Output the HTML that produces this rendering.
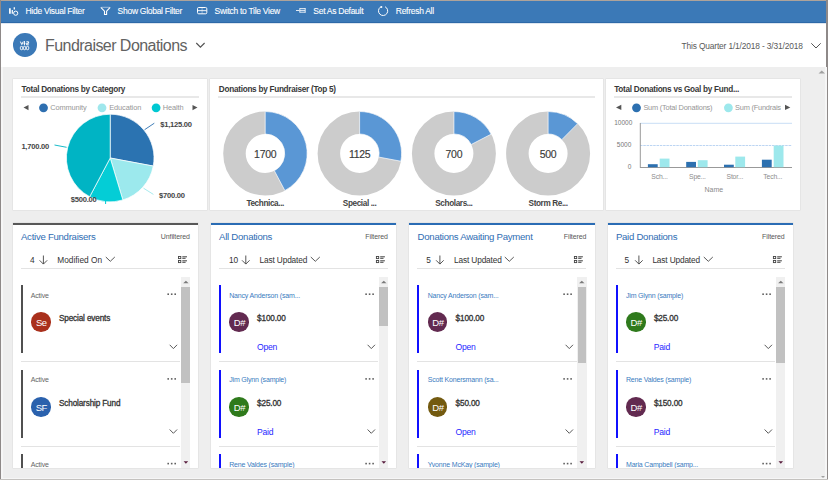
<!DOCTYPE html>
<html><head><meta charset="utf-8">
<style>
*{margin:0;padding:0;box-sizing:border-box}
html,body{width:828px;height:480px;overflow:hidden;background:#fff;font-family:"Liberation Sans",sans-serif}
.a{position:absolute;white-space:nowrap}
.tb{position:absolute;top:5.9px;font-size:8.5px;letter-spacing:-0.28px;color:#fff;-webkit-text-stroke:0.1px #fff;line-height:11px;white-space:nowrap}
.card{position:absolute;background:#fff;box-shadow:0 0 0 0.5px rgba(0,0,0,.07)}
.ct{position:absolute;font-weight:bold;font-size:8.2px;letter-spacing:-0.27px;color:#383838;line-height:9px;white-space:nowrap}
.ul{position:absolute;height:2px;background:#e8e8e8}
.lg{position:absolute;font-size:7.4px;letter-spacing:-0.1px;color:#969696;line-height:8px;white-space:nowrap}
.dot{position:absolute;width:9px;height:9px;border-radius:50%}
.lbl{position:absolute;font-weight:bold;font-size:7.6px;letter-spacing:-0.25px;color:#454545;line-height:8px;white-space:nowrap}
svg{position:absolute;left:0;top:0;overflow:visible}
</style></head><body>

<div class="a" style="left:0;top:0;width:828px;height:1px;background:#aea39a"></div>
<div class="a" style="left:0;top:0;width:1.2px;height:480px;background:#8e8988"></div>
<div class="a" style="left:826.3px;top:0;width:1.7px;height:480px;background:#8e8988"></div>
<div class="a" style="left:0;top:479px;width:828px;height:1px;background:#c4c2bf"></div>
<div class="a" style="left:1px;top:1px;width:825px;height:22px;background:#3b79b7"></div>
<div class="a" style="left:1px;top:22px;width:825px;height:1px;background:#2d69a8"></div>
<div class="a" style="left:1px;top:23px;width:825px;height:1px;background:#dde6f0"></div>
<div class="tb" style="left:25.5px">Hide Visual Filter</div>
<div class="tb" style="left:117.6px">Show Global Filter</div>
<div class="tb" style="left:214.6px">Switch to Tile View</div>
<div class="tb" style="left:313.3px">Set As Default</div>
<div class="tb" style="left:395.8px">Refresh All</div>
<svg width="828" height="30">
<g fill="none" stroke="#fff" stroke-width="1">
 <!-- hide visual filter: bars + gear -->
 <path d="M9.9,8.3 V13.8" stroke-width="1.7"/><path d="M12.3,10 V13.8" stroke-width="1.2"/><path d="M14.3,7.2 V9.6" stroke-width="1.3"/>
 <circle cx="15.7" cy="13.2" r="2.1"/>
 <!-- funnel -->
 <path d="M100.8,7.4 L104.5,11.2 V14.5 H106.6 V11.2 L110.2,7.4" stroke-width="1.1"/><path d="M101.5,7.3 H109.5" stroke-opacity="0.5"/>
 <!-- tile view -->
 <rect x="197.5" y="7.5" width="9.3" height="6.3" rx="1.2" stroke-width="1"/>
 <path d="M197.8,10.65 H206.5" stroke-width="0.9"/><path d="M202.1,7.8 V13.5" stroke-width="0.7" stroke-opacity="0.6"/>
 <!-- set default: pin -->
 <path d="M296,10.5 H299.5 M299.8,8.2 V12.6 M299.8,8.6 H305.2 M299.8,12.2 H305.2 M305.2,8 V12.8 M300,10.4 H305" stroke-width="0.85"/>
 <!-- refresh -->
 <path d="M385.04,6.73 A4.6,4.6 0 1 1 380.46,7.13" stroke-width="1"/>
 <rect x="380.4" y="6.1" width="1.8" height="1.8" fill="#fff" stroke="none"/>
</g>
</svg>
<div class="a" style="left:12.8px;top:33.1px;width:23.8px;height:23.8px;border-radius:50%;background:#3b79b7"></div>
<svg width="828" height="80"><g fill="none" stroke="#fff" stroke-width="0.8">
<g stroke-width="1"><rect x="20.4" y="46.4" width="2.3" height="3.3" rx="1"/><rect x="23.4" y="46.4" width="2.3" height="3.3" rx="1"/><rect x="26.4" y="46.4" width="2.3" height="3.3" rx="1"/><path d="M20.4,41.6 L21.8,44.6 L23.2,41.6 M24.4,41 V45.3 M23.6,43.3 H25.4 M26.4,41.8 H28.6 V43.3 H26.6 V44.8 H28.8"/></g>
</g></svg>
<div class="a" style="left:45px;top:36.8px;font-size:16px;color:#626262;line-height:18px;letter-spacing:-0.55px">Fundraiser Donations</div>
<svg width="828" height="80"><path d="M196.3,43 L200.4,47.2 L204.6,43" fill="none" stroke="#505050" stroke-width="1.1"/>
<path d="M811.3,43.3 L816,48 L820.7,43.3" fill="none" stroke="#555" stroke-width="1"/></svg>
<div class="a" style="left:681.5px;top:40.5px;font-size:8.4px;color:#595959;line-height:11px;letter-spacing:-0.15px">This Quarter 1/1/2018 - 3/31/2018</div>
<div class="a" style="left:1px;top:66.5px;width:825.5px;height:412.5px;background:#f6f6f6"></div>
<div class="a" style="left:2.5px;top:66.5px;width:822.5px;height:411.5px;background:#eeeeee"></div>
<svg width="828" height="480"><path d="M818.5,73.5 L821.8,70.5 L825,73.5 Z" fill="#a0a0a0"/>
<path d="M821,476 L823,478 L825,476 Z" fill="#a0a0a0"/></svg>
<div class="card" style="left:12.7px;top:79px;width:194.3px;height:131px"></div>
<div class="card" style="left:209.8px;top:79px;width:393.2px;height:131px"></div>
<div class="card" style="left:605.8px;top:79px;width:194.2px;height:131px"></div>
<div class="ct" style="left:21.6px;top:84.5px">Total Donations by Category</div>
<div class="ul" style="left:21px;top:95.8px;width:178px"></div>
<div class="ct" style="left:218.8px;top:84.5px">Donations by Fundraiser (Top 5)</div>
<div class="ul" style="left:218px;top:95.8px;width:377px"></div>
<div class="ct" style="left:614.2px;top:84.5px">Total Donations vs Goal by Fund...</div>
<div class="ul" style="left:614px;top:95.8px;width:178px"></div>
<svg width="828" height="480">
<path d="M23.5,107.6 L28.5,105 L28.5,110.2 Z" fill="#555"/>
<path d="M197.5,107.6 L192.5,105 L192.5,110.2 Z" fill="#555"/>
<circle cx="43.5" cy="107.8" r="4.4" fill="#2e6fb0"/>
<circle cx="102" cy="107.8" r="4.4" fill="#9fe7ec"/>
<circle cx="156.1" cy="107.8" r="4.4" fill="#00c8d2"/>
<path d="M110.20,158.00 L110.20,114.20 A43.8,43.8 0 0 1 153.25,166.07 Z" fill="#2b73b1" stroke="#fff" stroke-width="0.7"/>
<path d="M110.20,158.00 L153.25,166.07 A43.8,43.8 0 0 1 122.84,199.94 Z" fill="#9ce9ed" stroke="#fff" stroke-width="0.7"/>
<path d="M110.20,158.00 L122.84,199.94 A43.8,43.8 0 0 1 89.67,196.69 Z" fill="#04cdd6" stroke="#fff" stroke-width="0.7"/>
<path d="M110.20,158.00 L89.67,196.69 A43.8,43.8 0 0 1 110.20,114.20 Z" fill="#00b4c4" stroke="#fff" stroke-width="0.7"/>
<path d="M144.6,129.7 L154.3,123.2" stroke="#2c70b0" stroke-width="0.9"/>
<path d="M54.5,145 L66.6,147.3" stroke="#00b3c3" stroke-width="0.9"/>
<path d="M143.5,188.2 L153.4,194.4" stroke="#9de8ec" stroke-width="0.9"/>
<path d="M105.6,201 V204" stroke="#00c8d3" stroke-width="1"/>
<path d="M616,107.4 L621.3,104.8 L621.3,110 Z" fill="#555"/>
<path d="M790.3,107.4 L785,104.8 L785,110 Z" fill="#555"/>
<circle cx="636.5" cy="107.8" r="4.4" fill="#2c70b0"/>
<circle cx="728.4" cy="107.8" r="4.4" fill="#9de8ec"/>
<circle cx="265.2" cy="153.5" r="30.75" fill="none" stroke="#cccccc" stroke-width="22.5"/>
<path d="M265.20,111.50 A42,42 0 0 1 284.89,190.60 L274.34,170.73 A19.5,19.5 0 0 0 265.20,134.00 Z" fill="#5a97d5" stroke="#fff" stroke-width="0.7"/>
<circle cx="359.6" cy="153.5" r="30.75" fill="none" stroke="#cccccc" stroke-width="22.5"/>
<path d="M359.60,111.50 A42,42 0 0 1 400.88,161.24 L378.77,157.09 A19.5,19.5 0 0 0 359.60,134.00 Z" fill="#5a97d5" stroke="#fff" stroke-width="0.7"/>
<circle cx="453.9" cy="153.5" r="30.75" fill="none" stroke="#cccccc" stroke-width="22.5"/>
<path d="M453.90,111.50 A42,42 0 0 1 491.19,134.18 L471.21,144.53 A19.5,19.5 0 0 0 453.90,134.00 Z" fill="#5a97d5" stroke="#fff" stroke-width="0.7"/>
<circle cx="548.1" cy="153.5" r="30.75" fill="none" stroke="#cccccc" stroke-width="22.5"/>
<path d="M548.10,111.50 A42,42 0 0 1 577.65,123.66 L561.82,139.64 A19.5,19.5 0 0 0 548.10,134.00 Z" fill="#5a97d5" stroke="#fff" stroke-width="0.7"/>
<path d="M640,145.5 H792" stroke="#bcd5f3" stroke-width="1" stroke-dasharray="2.5,0.8"/>
<path d="M640,123.3 H792" stroke="#c9def5" stroke-width="1"/>
<path d="M640.3,123 V167.8 M640,167.5 H792" stroke="#999" stroke-width="1"/>
<rect x="647.9" y="164.2" width="9.8" height="3.00" fill="#2c70b0"/>
<rect x="659.7" y="158.6" width="9.8" height="8.60" fill="#9de8ec"/>
<rect x="686.2" y="161.9" width="9.8" height="5.30" fill="#2c70b0"/>
<rect x="697.8" y="160.2" width="9.8" height="7.00" fill="#9de8ec"/>
<rect x="724" y="164.7" width="9.8" height="2.50" fill="#2c70b0"/>
<rect x="735.3" y="156.6" width="9.8" height="10.60" fill="#9de8ec"/>
<rect x="761.9" y="159.7" width="9.8" height="7.50" fill="#2c70b0"/>
<rect x="773.7" y="145.6" width="9.8" height="21.60" fill="#9de8ec"/>
</svg>
<div class="lg" style="left:50.2px;top:103.8px">Community</div>
<div class="lg" style="left:109.2px;top:103.8px">Education</div>
<div class="lg" style="left:162.7px;top:103.8px">Health</div>
<div class="lg" style="left:643.4px;top:103.8px;letter-spacing:-0.2px">Sum (Total Donations)</div>
<div class="lg" style="left:735px;top:103.8px;width:46px;overflow:hidden;letter-spacing:-0.2px">Sum (Fundraising Goal)</div>
<div class="lbl" style="left:160.2px;top:121px">$1,125.00</div>
<div class="lbl" style="left:21.4px;top:142.8px">1,700.00</div>
<div class="lbl" style="left:70.8px;top:195.7px">$500.00</div>
<div class="lbl" style="left:159px;top:192px">$700.00</div>
<div class="a" style="left:245.2px;top:147.5px;width:40px;text-align:center;font-size:10.5px;color:#3a3a3a;line-height:12px;letter-spacing:-0.3px;-webkit-text-stroke:0.15px #3a3a3a">1700</div>
<div class="lbl" style="left:240.2px;top:199.9px;width:50px;text-align:center;color:#444;font-size:8.2px;letter-spacing:-0.38px">Technica...</div>
<div class="a" style="left:339.6px;top:147.5px;width:40px;text-align:center;font-size:10.5px;color:#3a3a3a;line-height:12px;letter-spacing:-0.3px;-webkit-text-stroke:0.15px #3a3a3a">1125</div>
<div class="lbl" style="left:334.6px;top:199.9px;width:50px;text-align:center;color:#444;font-size:8.2px;letter-spacing:-0.38px">Special ...</div>
<div class="a" style="left:433.9px;top:147.5px;width:40px;text-align:center;font-size:10.5px;color:#3a3a3a;line-height:12px;letter-spacing:-0.3px;-webkit-text-stroke:0.15px #3a3a3a">700</div>
<div class="lbl" style="left:428.9px;top:199.9px;width:50px;text-align:center;color:#444;font-size:8.2px;letter-spacing:-0.38px">Scholars...</div>
<div class="a" style="left:528.1px;top:147.5px;width:40px;text-align:center;font-size:10.5px;color:#3a3a3a;line-height:12px;letter-spacing:-0.3px;-webkit-text-stroke:0.15px #3a3a3a">500</div>
<div class="lbl" style="left:523.1px;top:199.9px;width:50px;text-align:center;color:#444;font-size:8.2px;letter-spacing:-0.38px">Storm Re...</div>
<div class="a" style="left:614.2px;top:119px;font-size:6.5px;color:#777;line-height:8px">10000</div>
<div class="a" style="left:616.8px;top:141.2px;font-size:6.5px;color:#777;line-height:8px">5000</div>
<div class="a" style="left:627.8px;top:162.8px;font-size:6.5px;color:#777;line-height:8px">0</div>
<div class="a" style="left:651.3px;top:173px;font-size:6.8px;letter-spacing:-0.15px;color:#8c8c8c;line-height:8px">Sch...</div>
<div class="a" style="left:689px;top:173px;font-size:6.8px;letter-spacing:-0.15px;color:#8c8c8c;line-height:8px">Spe...</div>
<div class="a" style="left:726.5px;top:173px;font-size:6.8px;letter-spacing:-0.15px;color:#8c8c8c;line-height:8px">Stor...</div>
<div class="a" style="left:763.3px;top:173px;font-size:6.8px;letter-spacing:-0.15px;color:#8c8c8c;line-height:8px">Tech...</div>
<div class="a" style="left:704.5px;top:185.5px;font-size:7px;color:#8a8a8a;line-height:8px">Name</div>
<div class="card" style="left:12.7px;top:223px;width:185.6px;height:245px;overflow:hidden">
<div class="a" style="left:0;top:-0.3px;width:185.6px;height:1.9px;background:#585858"></div>
<div class="a" style="left:8.3px;top:8px;font-size:9.6px;letter-spacing:-0.27px;color:#2f6db3;line-height:11px">Active Fundraisers</div>
<div class="a" style="right:8.5px;top:9.2px;font-size:7px;letter-spacing:-0.1px;color:#595959;line-height:9px">Unfiltered</div>
<div class="a" style="left:17.4px;top:32px;font-size:8.3px;color:#333;line-height:10px">4</div>
<svg width="200" height="250"><g fill="none" stroke="#444" stroke-width="0.9"><path d="M30.4,32.5 V41 M26.6,37.3 L30.4,41.1 L34.2,37.3"/></g></svg>
<div class="a" style="left:44.6px;top:32.4px;font-size:8.3px;letter-spacing:0px;color:#333;line-height:10px">Modified On</div>
<svg width="200" height="250"><g fill="none" stroke="#444" stroke-width="0.9"><path d="M92.80000000000001,34 L97.30000000000001,38.3 L101.80000000000001,34"/><rect x="165.5" y="33.5" width="2.3" height="2.1" stroke-width="0.9"/><rect x="165.5" y="37.5" width="2.3" height="2.1" stroke-width="0.9"/><path d="M169.29999999999998,33.8 H174.0 M169.29999999999998,35.3 H172.6 M169.29999999999998,37.8 H174.0 M169.29999999999998,39.3 H172.6" stroke-width="1"/></g></svg>
<div class="a" style="left:8px;top:44.5px;width:169.1px;height:1px;background:#e3e3e3"></div>
<div class="a" style="left:168.1px;top:54px;width:9.7px;height:193px;background:#f0f0f0"></div>
<div class="a" style="left:168.6px;top:64px;width:8.5px;height:96px;background:#c1c1c1"></div>
<svg width="200" height="250"><path d="M170.2,60.3 L172.9,57.8 L175.6,60.3 Z" fill="#7a7a7a"/><path d="M170.6,238.2 L172.9,240.8 L175.2,238.2 Z" fill="#5a1f3f"/></svg>
<div class="a" style="left:8px;top:62.0px;width:2px;height:68.3px;background:#505050"></div>
<div class="a" style="left:18px;top:67.5px;font-size:7px;letter-spacing:-0.18px;color:#666;line-height:9px">Active</div>
<svg width="200" height="480"><g fill="#606060"><rect x="154.4" y="70.4" width="1.6" height="1.6"/><rect x="157.9" y="70.4" width="1.6" height="1.6"/><rect x="161.4" y="70.4" width="1.6" height="1.6"/></g></svg>
<div class="a" style="left:18.6px;top:89.3px;width:19.6px;height:19.6px;border-radius:50%;background:#a9301c;color:#fff;font-size:9.5px;letter-spacing:-0.5px;line-height:22.2px;text-align:center;text-indent:0.4px">Se</div>
<div class="a" style="left:46.3px;top:90.9px;font-size:8.2px;letter-spacing:-0.15px;color:#333;-webkit-text-stroke:0.3px #333;line-height:9px">Special events</div>
<svg width="200" height="480"><path d="M156.7,121.8 L160.4,125.6 L164.1,121.8" fill="none" stroke="#5a5a5a" stroke-width="1"/></svg>
<div class="a" style="left:8px;top:138.3px;width:159.6px;height:1px;background:#e3e3e3"></div>
<div class="a" style="left:8px;top:146.7px;width:2px;height:68.3px;background:#505050"></div>
<div class="a" style="left:18px;top:152.2px;font-size:7px;letter-spacing:-0.18px;color:#666;line-height:9px">Active</div>
<svg width="200" height="480"><g fill="#606060"><rect x="154.4" y="155.1" width="1.6" height="1.6"/><rect x="157.9" y="155.1" width="1.6" height="1.6"/><rect x="161.4" y="155.1" width="1.6" height="1.6"/></g></svg>
<div class="a" style="left:18.6px;top:174.0px;width:19.6px;height:19.6px;border-radius:50%;background:#2a61ad;color:#fff;font-size:9.5px;letter-spacing:-0.5px;line-height:22.2px;text-align:center;text-indent:0.4px">SF</div>
<div class="a" style="left:46.3px;top:175.6px;font-size:8.2px;letter-spacing:-0.15px;color:#333;-webkit-text-stroke:0.3px #333;line-height:9px">Scholarship Fund</div>
<svg width="200" height="480"><path d="M156.7,206.5 L160.4,210.29999999999998 L164.1,206.5" fill="none" stroke="#5a5a5a" stroke-width="1"/></svg>
<div class="a" style="left:8px;top:223.0px;width:159.6px;height:1px;background:#e3e3e3"></div>
<div class="a" style="left:8px;top:231.4px;width:2px;height:68.3px;background:#505050"></div>
<div class="a" style="left:18px;top:236.9px;font-size:7px;letter-spacing:-0.18px;color:#666;line-height:9px">Active</div>
<svg width="200" height="480"><g fill="#606060"><rect x="154.4" y="239.8" width="1.6" height="1.6"/><rect x="157.9" y="239.8" width="1.6" height="1.6"/><rect x="161.4" y="239.8" width="1.6" height="1.6"/></g></svg>
<div class="a" style="left:8px;top:307.7px;width:159.6px;height:1px;background:#e3e3e3"></div>
</div>
<div class="card" style="left:210.8px;top:223px;width:185.5px;height:245px;overflow:hidden">
<div class="a" style="left:0;top:-0.3px;width:185.5px;height:1.9px;background:#2a6cb4"></div>
<div class="a" style="left:8.3px;top:8px;font-size:9.6px;letter-spacing:-0.27px;color:#2f6db3;line-height:11px">All Donations</div>
<div class="a" style="right:8.5px;top:9.2px;font-size:7px;letter-spacing:-0.1px;color:#595959;line-height:9px">Filtered</div>
<div class="a" style="left:18.2px;top:32px;font-size:8.3px;color:#333;line-height:10px">10</div>
<svg width="200" height="250"><g fill="none" stroke="#444" stroke-width="0.9"><path d="M34.8,32.5 V41 M31.0,37.3 L34.8,41.1 L38.599999999999994,37.3"/></g></svg>
<div class="a" style="left:48.8px;top:32.4px;font-size:8.3px;letter-spacing:-0.15px;color:#333;line-height:10px">Last Updated</div>
<svg width="200" height="250"><g fill="none" stroke="#444" stroke-width="0.9"><path d="M99.8,34 L104.3,38.3 L108.8,34"/><rect x="165.4" y="33.5" width="2.3" height="2.1" stroke-width="0.9"/><rect x="165.4" y="37.5" width="2.3" height="2.1" stroke-width="0.9"/><path d="M169.2,33.8 H173.9 M169.2,35.3 H172.5 M169.2,37.8 H173.9 M169.2,39.3 H172.5" stroke-width="1"/></g></svg>
<div class="a" style="left:8px;top:44.5px;width:169.0px;height:1px;background:#e3e3e3"></div>
<div class="a" style="left:168.0px;top:54px;width:9.7px;height:193px;background:#f0f0f0"></div>
<div class="a" style="left:168.5px;top:64px;width:8.5px;height:38.5px;background:#c1c1c1"></div>
<svg width="200" height="250"><path d="M170.1,60.3 L172.8,57.8 L175.5,60.3 Z" fill="#7a7a7a"/><path d="M170.5,238.2 L172.8,240.8 L175.1,238.2 Z" fill="#5a1f3f"/></svg>
<div class="a" style="left:8px;top:62.0px;width:2px;height:68.3px;background:#1010ff"></div>
<div class="a" style="left:18.4px;top:67.5px;font-size:7px;letter-spacing:-0.18px;color:#3a7bc0;line-height:9px">Nancy Anderson (sam...</div>
<svg width="200" height="480"><g fill="#606060"><rect x="154.3" y="70.4" width="1.6" height="1.6"/><rect x="157.8" y="70.4" width="1.6" height="1.6"/><rect x="161.3" y="70.4" width="1.6" height="1.6"/></g></svg>
<div class="a" style="left:18.6px;top:89.3px;width:19.6px;height:19.6px;border-radius:50%;background:#622a50;color:#fff;font-size:9.5px;letter-spacing:-0.5px;line-height:22.2px;text-align:center;text-indent:0.4px">D#</div>
<div class="a" style="left:46.3px;top:90.9px;font-size:8.2px;letter-spacing:-0.15px;color:#333;-webkit-text-stroke:0.3px #333;line-height:9px">$100.00</div>
<div class="a" style="left:46.2px;top:119.2px;font-size:8.6px;letter-spacing:-0.25px;color:#2828ff;line-height:10px">Open</div>
<svg width="200" height="480"><path d="M156.6,121.8 L160.3,125.6 L164.0,121.8" fill="none" stroke="#5a5a5a" stroke-width="1"/></svg>
<div class="a" style="left:8px;top:138.3px;width:159.5px;height:1px;background:#e3e3e3"></div>
<div class="a" style="left:8px;top:146.7px;width:2px;height:68.3px;background:#1010ff"></div>
<div class="a" style="left:18.4px;top:152.2px;font-size:7px;letter-spacing:-0.18px;color:#3a7bc0;line-height:9px">Jim Glynn (sample)</div>
<svg width="200" height="480"><g fill="#606060"><rect x="154.3" y="155.1" width="1.6" height="1.6"/><rect x="157.8" y="155.1" width="1.6" height="1.6"/><rect x="161.3" y="155.1" width="1.6" height="1.6"/></g></svg>
<div class="a" style="left:18.6px;top:174.0px;width:19.6px;height:19.6px;border-radius:50%;background:#2f7a1c;color:#fff;font-size:9.5px;letter-spacing:-0.5px;line-height:22.2px;text-align:center;text-indent:0.4px">D#</div>
<div class="a" style="left:46.3px;top:175.6px;font-size:8.2px;letter-spacing:-0.15px;color:#333;-webkit-text-stroke:0.3px #333;line-height:9px">$25.00</div>
<div class="a" style="left:46.2px;top:203.89999999999998px;font-size:8.6px;letter-spacing:-0.25px;color:#2828ff;line-height:10px">Paid</div>
<svg width="200" height="480"><path d="M156.6,206.5 L160.3,210.29999999999998 L164.0,206.5" fill="none" stroke="#5a5a5a" stroke-width="1"/></svg>
<div class="a" style="left:8px;top:223.0px;width:159.5px;height:1px;background:#e3e3e3"></div>
<div class="a" style="left:8px;top:231.4px;width:2px;height:68.3px;background:#1010ff"></div>
<div class="a" style="left:18.4px;top:236.9px;font-size:7px;letter-spacing:-0.18px;color:#3a7bc0;line-height:9px">Rene Valdes (sample)</div>
<svg width="200" height="480"><g fill="#606060"><rect x="154.3" y="239.8" width="1.6" height="1.6"/><rect x="157.8" y="239.8" width="1.6" height="1.6"/><rect x="161.3" y="239.8" width="1.6" height="1.6"/></g></svg>
<div class="a" style="left:8px;top:307.7px;width:159.5px;height:1px;background:#e3e3e3"></div>
</div>
<div class="card" style="left:409.3px;top:223px;width:185.5px;height:245px;overflow:hidden">
<div class="a" style="left:0;top:-0.3px;width:185.5px;height:1.9px;background:#2a6cb4"></div>
<div class="a" style="left:8.3px;top:8px;font-size:9.6px;letter-spacing:-0.27px;color:#2f6db3;line-height:11px">Donations Awaiting Payment</div>
<div class="a" style="right:8.5px;top:9.2px;font-size:7px;letter-spacing:-0.1px;color:#595959;line-height:9px">Filtered</div>
<div class="a" style="left:17.0px;top:32px;font-size:8.3px;color:#333;line-height:10px">5</div>
<svg width="200" height="250"><g fill="none" stroke="#444" stroke-width="0.9"><path d="M30.9,32.5 V41 M27.1,37.3 L30.9,41.1 L34.7,37.3"/></g></svg>
<div class="a" style="left:44.8px;top:32.4px;font-size:8.3px;letter-spacing:-0.15px;color:#333;line-height:10px">Last Updated</div>
<svg width="200" height="250"><g fill="none" stroke="#444" stroke-width="0.9"><path d="M95.8,34 L100.3,38.3 L104.8,34"/><rect x="165.4" y="33.5" width="2.3" height="2.1" stroke-width="0.9"/><rect x="165.4" y="37.5" width="2.3" height="2.1" stroke-width="0.9"/><path d="M169.2,33.8 H173.9 M169.2,35.3 H172.5 M169.2,37.8 H173.9 M169.2,39.3 H172.5" stroke-width="1"/></g></svg>
<div class="a" style="left:8px;top:44.5px;width:169.0px;height:1px;background:#e3e3e3"></div>
<div class="a" style="left:168.0px;top:54px;width:9.7px;height:193px;background:#f0f0f0"></div>
<div class="a" style="left:168.5px;top:64px;width:8.5px;height:76.30000000000001px;background:#c1c1c1"></div>
<svg width="200" height="250"><path d="M170.1,60.3 L172.8,57.8 L175.5,60.3 Z" fill="#7a7a7a"/><path d="M170.5,238.2 L172.8,240.8 L175.1,238.2 Z" fill="#5a1f3f"/></svg>
<div class="a" style="left:8px;top:62.0px;width:2px;height:68.3px;background:#1010ff"></div>
<div class="a" style="left:18.4px;top:67.5px;font-size:7px;letter-spacing:-0.18px;color:#3a7bc0;line-height:9px">Nancy Anderson (sam...</div>
<svg width="200" height="480"><g fill="#606060"><rect x="154.3" y="70.4" width="1.6" height="1.6"/><rect x="157.8" y="70.4" width="1.6" height="1.6"/><rect x="161.3" y="70.4" width="1.6" height="1.6"/></g></svg>
<div class="a" style="left:18.6px;top:89.3px;width:19.6px;height:19.6px;border-radius:50%;background:#622a50;color:#fff;font-size:9.5px;letter-spacing:-0.5px;line-height:22.2px;text-align:center;text-indent:0.4px">D#</div>
<div class="a" style="left:46.3px;top:90.9px;font-size:8.2px;letter-spacing:-0.15px;color:#333;-webkit-text-stroke:0.3px #333;line-height:9px">$100.00</div>
<div class="a" style="left:46.2px;top:119.2px;font-size:8.6px;letter-spacing:-0.25px;color:#2828ff;line-height:10px">Open</div>
<svg width="200" height="480"><path d="M156.6,121.8 L160.3,125.6 L164.0,121.8" fill="none" stroke="#5a5a5a" stroke-width="1"/></svg>
<div class="a" style="left:8px;top:138.3px;width:159.5px;height:1px;background:#e3e3e3"></div>
<div class="a" style="left:8px;top:146.7px;width:2px;height:68.3px;background:#1010ff"></div>
<div class="a" style="left:18.4px;top:152.2px;font-size:7px;letter-spacing:-0.18px;color:#3a7bc0;line-height:9px">Scott Konersmann (sa...</div>
<svg width="200" height="480"><g fill="#606060"><rect x="154.3" y="155.1" width="1.6" height="1.6"/><rect x="157.8" y="155.1" width="1.6" height="1.6"/><rect x="161.3" y="155.1" width="1.6" height="1.6"/></g></svg>
<div class="a" style="left:18.6px;top:174.0px;width:19.6px;height:19.6px;border-radius:50%;background:#735a10;color:#fff;font-size:9.5px;letter-spacing:-0.5px;line-height:22.2px;text-align:center;text-indent:0.4px">D#</div>
<div class="a" style="left:46.3px;top:175.6px;font-size:8.2px;letter-spacing:-0.15px;color:#333;-webkit-text-stroke:0.3px #333;line-height:9px">$50.00</div>
<div class="a" style="left:46.2px;top:203.89999999999998px;font-size:8.6px;letter-spacing:-0.25px;color:#2828ff;line-height:10px">Open</div>
<svg width="200" height="480"><path d="M156.6,206.5 L160.3,210.29999999999998 L164.0,206.5" fill="none" stroke="#5a5a5a" stroke-width="1"/></svg>
<div class="a" style="left:8px;top:223.0px;width:159.5px;height:1px;background:#e3e3e3"></div>
<div class="a" style="left:8px;top:231.4px;width:2px;height:68.3px;background:#1010ff"></div>
<div class="a" style="left:18.4px;top:236.9px;font-size:7px;letter-spacing:-0.18px;color:#3a7bc0;line-height:9px">Yvonne McKay (sample)</div>
<svg width="200" height="480"><g fill="#606060"><rect x="154.3" y="239.8" width="1.6" height="1.6"/><rect x="157.8" y="239.8" width="1.6" height="1.6"/><rect x="161.3" y="239.8" width="1.6" height="1.6"/></g></svg>
<div class="a" style="left:8px;top:307.7px;width:159.5px;height:1px;background:#e3e3e3"></div>
</div>
<div class="card" style="left:607.6px;top:223px;width:185.5px;height:245px;overflow:hidden">
<div class="a" style="left:0;top:-0.3px;width:185.5px;height:1.9px;background:#2a6cb4"></div>
<div class="a" style="left:8.3px;top:8px;font-size:9.6px;letter-spacing:-0.27px;color:#2f6db3;line-height:11px">Paid Donations</div>
<div class="a" style="right:8.5px;top:9.2px;font-size:7px;letter-spacing:-0.1px;color:#595959;line-height:9px">Filtered</div>
<div class="a" style="left:17.0px;top:32px;font-size:8.3px;color:#333;line-height:10px">5</div>
<svg width="200" height="250"><g fill="none" stroke="#444" stroke-width="0.9"><path d="M30.9,32.5 V41 M27.1,37.3 L30.9,41.1 L34.7,37.3"/></g></svg>
<div class="a" style="left:44.8px;top:32.4px;font-size:8.3px;letter-spacing:-0.15px;color:#333;line-height:10px">Last Updated</div>
<svg width="200" height="250"><g fill="none" stroke="#444" stroke-width="0.9"><path d="M95.8,34 L100.3,38.3 L104.8,34"/><rect x="165.4" y="33.5" width="2.3" height="2.1" stroke-width="0.9"/><rect x="165.4" y="37.5" width="2.3" height="2.1" stroke-width="0.9"/><path d="M169.2,33.8 H173.9 M169.2,35.3 H172.5 M169.2,37.8 H173.9 M169.2,39.3 H172.5" stroke-width="1"/></g></svg>
<div class="a" style="left:8px;top:44.5px;width:169.0px;height:1px;background:#e3e3e3"></div>
<div class="a" style="left:168.0px;top:54px;width:9.7px;height:193px;background:#f0f0f0"></div>
<div class="a" style="left:168.5px;top:64px;width:8.5px;height:76.30000000000001px;background:#c1c1c1"></div>
<svg width="200" height="250"><path d="M170.1,60.3 L172.8,57.8 L175.5,60.3 Z" fill="#7a7a7a"/><path d="M170.5,238.2 L172.8,240.8 L175.1,238.2 Z" fill="#5a1f3f"/></svg>
<div class="a" style="left:8px;top:62.0px;width:2px;height:68.3px;background:#1010ff"></div>
<div class="a" style="left:18.4px;top:67.5px;font-size:7px;letter-spacing:-0.18px;color:#3a7bc0;line-height:9px">Jim Glynn (sample)</div>
<svg width="200" height="480"><g fill="#606060"><rect x="154.3" y="70.4" width="1.6" height="1.6"/><rect x="157.8" y="70.4" width="1.6" height="1.6"/><rect x="161.3" y="70.4" width="1.6" height="1.6"/></g></svg>
<div class="a" style="left:18.6px;top:89.3px;width:19.6px;height:19.6px;border-radius:50%;background:#2f7a1c;color:#fff;font-size:9.5px;letter-spacing:-0.5px;line-height:22.2px;text-align:center;text-indent:0.4px">D#</div>
<div class="a" style="left:46.3px;top:90.9px;font-size:8.2px;letter-spacing:-0.15px;color:#333;-webkit-text-stroke:0.3px #333;line-height:9px">$25.00</div>
<div class="a" style="left:46.2px;top:119.2px;font-size:8.6px;letter-spacing:-0.25px;color:#2828ff;line-height:10px">Paid</div>
<svg width="200" height="480"><path d="M156.6,121.8 L160.3,125.6 L164.0,121.8" fill="none" stroke="#5a5a5a" stroke-width="1"/></svg>
<div class="a" style="left:8px;top:138.3px;width:159.5px;height:1px;background:#e3e3e3"></div>
<div class="a" style="left:8px;top:146.7px;width:2px;height:68.3px;background:#1010ff"></div>
<div class="a" style="left:18.4px;top:152.2px;font-size:7px;letter-spacing:-0.18px;color:#3a7bc0;line-height:9px">Rene Valdes (sample)</div>
<svg width="200" height="480"><g fill="#606060"><rect x="154.3" y="155.1" width="1.6" height="1.6"/><rect x="157.8" y="155.1" width="1.6" height="1.6"/><rect x="161.3" y="155.1" width="1.6" height="1.6"/></g></svg>
<div class="a" style="left:18.6px;top:174.0px;width:19.6px;height:19.6px;border-radius:50%;background:#622a50;color:#fff;font-size:9.5px;letter-spacing:-0.5px;line-height:22.2px;text-align:center;text-indent:0.4px">D#</div>
<div class="a" style="left:46.3px;top:175.6px;font-size:8.2px;letter-spacing:-0.15px;color:#333;-webkit-text-stroke:0.3px #333;line-height:9px">$150.00</div>
<div class="a" style="left:46.2px;top:203.89999999999998px;font-size:8.6px;letter-spacing:-0.25px;color:#2828ff;line-height:10px">Paid</div>
<svg width="200" height="480"><path d="M156.6,206.5 L160.3,210.29999999999998 L164.0,206.5" fill="none" stroke="#5a5a5a" stroke-width="1"/></svg>
<div class="a" style="left:8px;top:223.0px;width:159.5px;height:1px;background:#e3e3e3"></div>
<div class="a" style="left:8px;top:231.4px;width:2px;height:68.3px;background:#1010ff"></div>
<div class="a" style="left:18.4px;top:236.9px;font-size:7px;letter-spacing:-0.18px;color:#3a7bc0;line-height:9px">Maria Campbell (samp...</div>
<svg width="200" height="480"><g fill="#606060"><rect x="154.3" y="239.8" width="1.6" height="1.6"/><rect x="157.8" y="239.8" width="1.6" height="1.6"/><rect x="161.3" y="239.8" width="1.6" height="1.6"/></g></svg>
<div class="a" style="left:8px;top:307.7px;width:159.5px;height:1px;background:#e3e3e3"></div>
</div>
</body></html>
